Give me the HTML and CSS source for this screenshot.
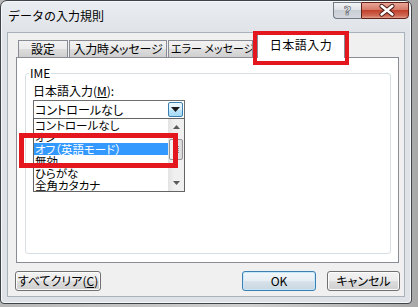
FILE: index.html
```html
<!DOCTYPE html>
<html lang="ja">
<head>
<meta charset="utf-8">
<title>データの入力規則</title>
<link rel="stylesheet" href="styles.css">
</head>
<body>
<div class="window">
  <div class="titlebar">
    <span class="title">データの入力規則</span>
    <div class="caption">
      <div class="cap help"><span class="help-q">?</span></div>
      <div class="cap close">
        <svg width="47" height="17" viewBox="0 0 47 17">
          <path d="M20 4 L31 12.5 M31 4 L20 12.5" stroke="#4a1d16" stroke-width="4.6" stroke-linecap="round" fill="none"/>
          <path d="M20 4 L31 12.5 M31 4 L20 12.5" stroke="#ffffff" stroke-width="2.6" stroke-linecap="round" fill="none"/>
        </svg>
      </div>
    </div>
  </div>
  <div class="content">
    <div class="tabs">
      <div class="tab t1">設定</div>
      <div class="tab t2">入力時メッセージ</div>
      <div class="tab t3">エラー メッセージ</div>
      <div class="tab sel">日本語入力</div>
    </div>
    <div class="panel">
      <div class="group">
        <span class="legend">IME</span>
        <div class="field-label">日本語入力(<u>M</u>):</div>
        <div class="combo">
          <span class="combo-text">コントロールなし</span>
          <span class="combo-btn">
            <svg width="9" height="5" viewBox="0 0 9 5"><path d="M0 0 H9 L4.5 5 Z" fill="#1b1b1b"/></svg>
          </span>
          <div class="listbox">
            <div class="items">
              <div class="item">コントロールなし</div>
              <div class="item">オン</div>
              <div class="item hl">オフ（英語モード）</div>
              <div class="item">無効</div>
              <div class="item">ひらがな</div>
              <div class="item">全角カタカナ</div>
            </div>
            <div class="scrollbar">
              <div class="sb-arrow">
                <svg width="7" height="4" viewBox="0 0 7 4"><path d="M0 4 H7 L3.5 0 Z" fill="#5a5a5a"/></svg>
              </div>
              <div class="sb-track">
                <div class="sb-thumb">
                  <span class="grip"></span><span class="grip"></span><span class="grip"></span><span class="grip"></span>
                </div>
              </div>
              <div class="sb-arrow">
                <svg width="7" height="4" viewBox="0 0 7 4"><path d="M0 0 H7 L3.5 4 Z" fill="#5a5a5a"/></svg>
              </div>
            </div>
          </div>
        </div>
      </div>
    </div>
    <div class="buttons">
      <div class="btn clear">すべてクリア(<u>C</u>)</div>
      <div class="spacer"></div>
      <div class="btn ok">OK</div>
      <div class="btn cancel">キャンセル</div>
    </div>
  </div>
  <div class="mark mark-tab"></div>
  <div class="mark mark-item"></div>
</div>
</body>
</html>
```

FILE: styles.css
```css
html, body {
  margin: 0;
  padding: 0;
}
body {
  width: 418px;
  height: 307px;
  overflow: hidden;
  background: linear-gradient(90deg, #b8b8b8, #cfcfcf 60%, #a9a9a9);
  font-family: "Noto Sans CJK JP", "Noto Sans", sans-serif;
  font-size: 12px;
  color: #000;
}

.window {
  position: relative;
  width: 412px;
  height: 304px;
  box-sizing: border-box;
  border: 1px solid #3f4448;
  border-radius: 7px 7px 4px 4px;
  background: linear-gradient(#eaedf1, #e0e4e9 30px, #dfe3e8);
  box-shadow: inset 0 0 0 1px #f6f8fa;
  display: flex;
  flex-direction: column;
}

/* title bar */
.titlebar {
  height: 31px;
  display: flex;
  align-items: flex-start;
  padding-left: 7px;
}
.title {
  margin-top: 7px;
  line-height: 16px;
  font-size: 12px;
  color: #000;
}
.caption {
  margin-left: auto;
  margin-right: 2px;
  margin-top: 1px;
  display: flex;
}
.cap {
  height: 17px;
  box-sizing: border-box;
  display: flex;
  align-items: center;
  justify-content: center;
}
.help {
  width: 28px;
  border: 1px solid #707a86;
  border-right: none;
  border-radius: 0 0 0 4px;
  background: linear-gradient(#f3f4f6, #dfe2e6 45%, #c9ced5 50%, #d5d9de);
}
.help-q {
  font-family: "DejaVu Sans", sans-serif;
  font-size: 13px;
  font-weight: bold;
  line-height: 15px;
  color: #f7f7f7;
  -webkit-text-stroke: 0.7px #5b5f66;
}
.close {
  width: 48px;
  border: 1px solid #5e2219;
  border-radius: 0 0 4px 0;
  background: linear-gradient(#e9a597, #d67a68 45%, #c2412c 50%, #cf6a55 85%, #e4a08e);
}

/* content area */
.content {
  flex: 1;
  margin: 0 6px 6px 6px;
  border: 1px solid #a9b1ba;
  background: #f0f0f0;
  display: flex;
  flex-direction: column;
}

/* tabs */
.tabs {
  height: 24px;
  display: flex;
  align-items: flex-end;
  padding-left: 10px;
  font-feature-settings: "palt";
}
.tab {
  height: 17px;
  box-sizing: border-box;
  border: 1px solid #898c95;
  border-bottom: none;
  background: linear-gradient(#f2f2f2, #ebebeb 50%, #dddddd 51%, #cfcfcf);
  text-align: center;
  line-height: 15px;
  margin-right: 1px;
  white-space: nowrap;
  overflow: hidden;
}
.t1 { width: 50px; }
.t2 { width: 98px; letter-spacing: -0.2px; }
.t3 { width: 85px; font-size: 11px; padding-left: 2px; }
.sel {
  position: relative;
  z-index: 1;
  width: 88px;
  height: 24px;
  margin-left: 3px;
  margin-bottom: -1px;
  background: #fff;
  line-height: 18px;
  padding-top: 1px;
  letter-spacing: 0.5px;
}

/* tab panel */
.panel {
  margin-left: 8px;
  width: 383px;
  height: 206px;
  box-sizing: border-box;
  border: 1px solid #898c95;
  background: #fff;
  padding: 15px 7px 8px 8px;
}
.group {
  height: 181px;
  box-sizing: border-box;
  border: 1px solid #d5dfe5;
  border-radius: 3px;
  padding-left: 7px;
}
.legend {
  display: block;
  width: fit-content;
  margin: -8px 0 0 -4px;
  padding: 0 1px;
  line-height: 14px;
  background: #fff;
}
.field-label {
  margin-top: 4px;
  line-height: 14px;
}
.field-label u, .btn u {
  text-underline-offset: 1px;
}

/* combo box */
.combo {
  position: relative;
  margin-top: 2px;
  width: 152px;
  height: 19px;
  box-sizing: border-box;
  border: 1px solid #6e6e6e;
  background: #fff;
  display: flex;
  align-items: center;
  font-feature-settings: "palt";
}
.combo-text {
  padding-left: 1px;
  line-height: 15px;
}
.combo-btn {
  margin-left: auto;
  width: 15px;
  height: 15px;
  margin-right: 1px;
  box-sizing: border-box;
  border: 1px solid #3c7fb1;
  border-radius: 2px;
  background: linear-gradient(#eaf6fd, #d9f0fc 50%, #bee6fd 51%, #a7d9f5);
  display: flex;
  align-items: center;
  justify-content: center;
}

/* drop-down list */
.listbox {
  position: absolute;
  top: 100%;
  left: -1px;
  width: 152px;
  height: 74px;
  box-sizing: border-box;
  border: 1px solid #646464;
  background: #fff;
  display: flex;
  z-index: 2;
}
.items {
  flex: 1;
}
.item {
  height: 12px;
  line-height: 12px;
  font-size: 11.5px;
  padding-left: 1px;
  white-space: nowrap;
}
.item.hl {
  background: #3399ff;
  color: #fff;
}
.scrollbar {
  width: 16px;
  display: flex;
  flex-direction: column;
  background: linear-gradient(90deg, #e3e3e3, #f0f0f0 40%, #f0f0f0);
}
.sb-arrow {
  height: 16px;
  display: flex;
  align-items: center;
  justify-content: center;
}
.sb-track {
  flex: 1;
  padding-top: 4px;
}
.sb-thumb {
  margin: 0 1px;
  height: 21px;
  box-sizing: border-box;
  border: 1px solid #969696;
  border-radius: 2px;
  background: linear-gradient(90deg, #f4f4f4, #e8e8e8 50%, #d8d8d8);
  display: flex;
  flex-direction: column;
  align-items: center;
  justify-content: center;
  gap: 1px;
}
.grip {
  width: 6px;
  height: 1px;
  background: #8a8a8a;
}

/* bottom buttons */
.buttons {
  display: flex;
  margin-top: 8px;
  padding: 0 4px 0 7px;
}
.spacer { flex: 1; }
.btn {
  height: 20px;
  box-sizing: border-box;
  border: 1px solid #707070;
  border-radius: 3px;
  background: linear-gradient(#f2f2f2, #ebebeb 50%, #dddddd 51%, #cfcfcf);
  box-shadow: inset 0 0 0 1px #fcfcfc;
  line-height: 17px;
  text-align: center;
  font-feature-settings: "palt";
}
.clear { width: 86px; }
.ok {
  width: 74px;
  border-color: #3c7fb1;
  box-shadow: inset 0 0 0 1px #c5e7fb;
  background: linear-gradient(#f1f7fb, #e6eef3 50%, #d7e2ea 51%, #cad7e0);
}
.cancel {
  width: 73px;
  margin-left: 11px;
}

/* red annotation frames */
.mark {
  position: absolute;
  box-sizing: border-box;
  border: 4px solid #e4161e;
  z-index: 5;
}
.mark-tab {
  left: 252px;
  top: 30px;
  width: 96px;
  height: 34px;
}
.mark-item {
  left: 18px;
  top: 132px;
  width: 159px;
  height: 35px;
  border-width: 5px;
}
```
